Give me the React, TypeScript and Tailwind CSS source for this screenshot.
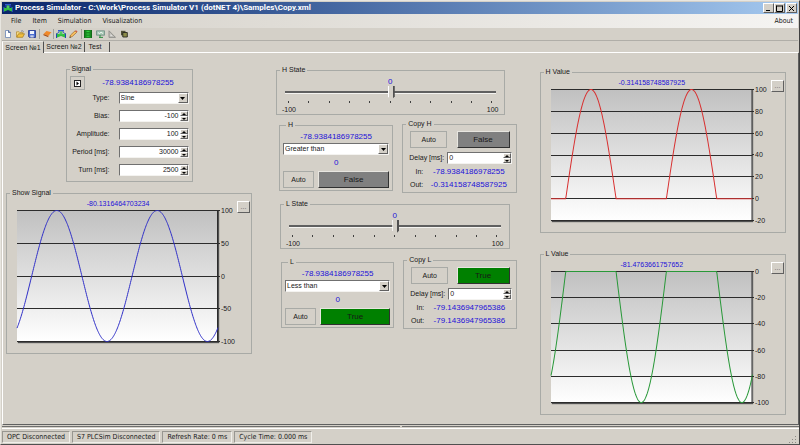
import React from 'react';

const TAHOMA = "font-['DejaVu_Sans_Condensed','DejaVu_Sans',sans-serif]";
const RAISED = 'border border-t-white border-l-white border-r-[#606060] border-b-[#606060] bg-[#d4d0c8]';
const SUNKEN = 'border border-t-[#707070] border-l-[#707070] border-r-[#f4f3f0] border-b-[#f4f3f0] bg-white';

const GroupBox: React.FC<{ title: string; className?: string; children: React.ReactNode }> = ({ title, className = '', children }) => (
  <fieldset className={`relative min-w-0 border border-[#a8aaa6] ${className}`}>
    <legend className="ml-[3px] px-[2px] h-[12px] leading-[12px]">{title}</legend>
    {children}
  </fieldset>
);

const Reading: React.FC<{ children: React.ReactNode; className?: string }> = ({ children, className = '' }) => (
  <output className={`block text-center text-[#1c10d8] whitespace-nowrap ${className}`}>{children}</output>
);

const Combo: React.FC<{ id?: string; label?: string; value: string; className?: string }> = ({ id, label, value, className = '' }) => (
  <div className={`flex h-[12px] ${SUNKEN} ${className}`}>
    <select id={id} aria-label={label} defaultValue={value} className="appearance-none flex-1 min-w-0 pl-px h-[10px] leading-[10px] bg-transparent outline-none">
      <option>{value}</option>
    </select>
    <span className={`flex items-center justify-center w-[10px] h-[10px] pointer-events-none ${RAISED}`}>
      <svg width="5" height="3" viewBox="0 0 5 3"><path d="M0 0h5L2.5 3z" fill="#000" /></svg>
    </span>
  </div>
);

const Spinner: React.FC<{ id: string; value: number; align?: string }> = ({ id, value, align = 'text-right' }) => (
  <div className={`flex flex-1 min-w-0 h-[12px] ${SUNKEN}`}>
    <input
      id={id}
      type="number"
      defaultValue={value}
      className={`flex-1 min-w-0 h-[10px] px-px leading-[10px] bg-transparent outline-none [appearance:textfield] [&::-webkit-inner-spin-button]:appearance-none ${align}`}
    />
    <div className="flex flex-col w-[8px]">
      <button type="button" aria-label="Increase" className={`flex items-center justify-center h-[5px] ${RAISED}`}>
        <svg width="4" height="2" viewBox="0 0 4 2" className="shrink-0"><path d="M0 2h4L2 0z" fill="#000" /></svg>
      </button>
      <button type="button" aria-label="Decrease" className={`flex items-center justify-center h-[5px] ${RAISED}`}>
        <svg width="4" height="2" viewBox="0 0 4 2" className="shrink-0"><path d="M0 0h4L2 2z" fill="#000" /></svg>
      </button>
    </div>
  </div>
);

const AutoButton: React.FC<{ className: string }> = ({ className }) => (
  <button type="button" className={`h-[17px] border border-[#a8aaa6] ${className}`}>Auto</button>
);

const StateButton: React.FC<{ on: boolean; className: string }> = ({ on, className }) => (
  <button
    type="button"
    className={`h-[17px] text-[8px] border border-t-[#e8e6e0] border-l-[#e8e6e0] border-r-[#303030] border-b-[#303030] ${on ? 'bg-[#008000]' : 'bg-[#808080]'} ${className}`}
  >
    {on ? 'True' : 'False'}
  </button>
);

const TrackBar: React.FC<{ title: string; className: string }> = ({ title, className }) => (
  <GroupBox title={title} className={className}>
    <Reading className="mt-px h-[9px] leading-[9px] text-[8px]">0</Reading>
    <input
      type="range"
      min={-100}
      max={100}
      defaultValue={1}
      aria-label={title}
      className="block appearance-none h-[14px] w-[calc(100%-16px)] mx-[8px] bg-no-repeat bg-[linear-gradient(#d4d0c8_5px,#606060_5px,#606060_7px,#f4f3f0_7px,#f4f3f0_8px,#d4d0c8_8px)] [&::-webkit-slider-thumb]:appearance-none [&::-webkit-slider-thumb]:w-[7px] [&::-webkit-slider-thumb]:h-[14px] [&::-webkit-slider-thumb]:bg-[linear-gradient(90deg,#fff_1px,#d4d0c8_1px,#d4d0c8_5px,#505050_5px)] [&::-webkit-slider-thumb]:[clip-path:polygon(0_0,100%_0,100%_75%,50%_100%,0_75%)]"
    />
    <div className="flex justify-between mx-[11px] mt-px">
      {Array.from({ length: 11 }, (_, i) => <span key={i} className="w-px h-[2px] bg-[#404040]" />)}
    </div>
    <div className="flex justify-between pl-[5px] pr-[5px] mt-[2px] leading-[9px]">
      <span>-100</span>
      <span>100</span>
    </div>
  </GroupBox>
);

const Compare: React.FC<{ title: string; op: string; on: boolean; className?: string }> = ({ title, op, on, className = '' }) => (
  <GroupBox title={title} className={`h-[72px] px-[3px] ${className}`}>
    <Reading className="h-[12px] leading-[12px] text-[8px]">-78.9384186978255</Reading>
    <Combo label={`${title} comparison`} value={op} />
    <Reading className="mt-[3px] h-[10px] leading-[10px] text-[8px]">0</Reading>
    <div className="flex gap-[4px] mt-[3px]">
      <AutoButton className="w-[31px]" />
      <StateButton on={on} className="flex-1" />
    </div>
  </GroupBox>
);

const CopyBox: React.FC<{ title: string; on: boolean; input: string; output: string }> = ({ title, on, input, output }) => (
  <GroupBox title={title} className="h-[75px]">
    <div className="flex justify-between pl-[7px] pr-[6px] mt-px">
      <AutoButton className="w-[37px]" />
      <StateButton on={on} className="w-[53px]" />
    </div>
    <div className="flex items-center gap-[3px] pl-[6px] pr-[4px] mt-[4px]">
      <label htmlFor={`delay-${title}`} className="leading-[12px] whitespace-nowrap">Delay [ms]:</label>
      <Spinner id={`delay-${title}`} value={0} align="text-left" />
    </div>
    <div className="grid grid-cols-[20px_1fr] gap-y-[3px] pr-px mt-[3px] leading-[10px]">
      <span className="text-right">In:</span>
      <Reading className="text-[8px]">{input}</Reading>
      <span className="text-right">Out:</span>
      <Reading className="text-[8px]">{output}</Reading>
    </div>
  </GroupBox>
);

interface TrendProps {
  title: string;
  value: string;
  ticks: number[];
  color: string;
  low?: number;
  high?: number;
}

const Trend: React.FC<TrendProps> = ({ title, value, ticks, color, low = -100, high = 100 }) => {
  const top = ticks[0];
  const bottom = ticks[ticks.length - 1];
  const toY = (v: number) => Math.round(((top - v) / (top - bottom)) * 1310) / 10 + 0.5;
  const points = Array.from({ length: 403 }, (_, i) => {
    const x = i / 2;
    const v = 100 * Math.cos(((x - 39.8) / 100.4) * 2 * Math.PI);
    return `${x},${toY(Math.min(high, Math.max(low, v)))}`;
  }).join(' ');
  const fill = `fill-${color.slice(1)}`;

  return (
    <GroupBox title={title} className="h-[167px]">
      <Reading className="h-[9px] leading-[9px] ml-[10px] mr-[32px]">{value}</Reading>
      <div className="flex mt-[2px] ml-[10px]">
        <svg viewBox="0 0 201 132" preserveAspectRatio="none" className="flex-1 min-w-0 h-[132px] overflow-visible shadow-[1px_1px_1px_#505050]">
          <defs>
            <linearGradient id={fill} x1="0" y1="0" x2="0" y2="1">
              <stop offset="0" stopColor="#c0c0c0" />
              <stop offset="1" stopColor="#ffffff" />
            </linearGradient>
          </defs>
          <rect width="201" height="132" fill={`url(#${fill})`} />
          {ticks.map((t) => (
            <line key={t} x1="0" x2="201" y1={Math.floor(toY(t)) + 0.5} y2={Math.floor(toY(t)) + 0.5} stroke="#2c2c2c" strokeWidth="1" />
          ))}
          <line x1="200.5" x2="200.5" y1="0" y2="132" stroke="#2c2c2c" />
          <polyline points={points} fill="none" stroke={color} strokeWidth="1" />
        </svg>
        <div className="flex flex-col justify-between w-[33px] -my-[4px]">
          {ticks.map((t) => (
            <span key={t} className="flex items-center gap-px h-[9px] leading-[9px]">
              <i className="w-[2px] h-px bg-[#2c2c2c]" />
              {t}
            </span>
          ))}
        </div>
      </div>
      <button type="button" aria-label={`${title} options`} className={`absolute right-px top-[2px] w-[13px] h-[12px] leading-[6px] text-[#606060] ${RAISED}`}>...</button>
    </GroupBox>
  );
};

const SIGNAL_FIELDS = [
  { id: 'bias', label: 'Bias:', value: -100 },
  { id: 'amplitude', label: 'Amplitude:', value: 100 },
  { id: 'period', label: 'Period [ms]:', value: 30000 },
  { id: 'turn', label: 'Turn [ms]:', value: 2500 },
];

const SignalBox: React.FC = () => (
  <GroupBox title="Signal" className="w-[127px] h-[119px] mx-auto">
    <div className="flex items-center pl-[3px] mt-px">
      <button type="button" aria-label="Run" className="flex items-center justify-center w-[15px] h-[14px] border border-[#a8aaa6]">
        <svg width="7" height="7" viewBox="0 0 7 7">
          <rect x="0.5" y="0.5" width="6" height="6" fill="#fff" stroke="#222" />
          <path d="M2.5 1.5v4l2.5-2z" fill="#000" />
        </svg>
      </button>
      <Reading className="flex-1 text-[8px] leading-[10px]">-78.9384186978255</Reading>
    </div>
    <div className="grid grid-cols-[43px_1fr] gap-x-[9px] gap-y-[6px] pr-[3px] mt-[2px] leading-[12px]">
      <label htmlFor="type" className="text-right">Type:</label>
      <Combo id="type" value="Sine" />
      {SIGNAL_FIELDS.map((f) => (
        <React.Fragment key={f.id}>
          <label htmlFor={f.id} className="text-right whitespace-nowrap">{f.label}</label>
          <Spinner id={f.id} value={f.value} />
        </React.Fragment>
      ))}
    </div>
  </GroupBox>
);

const TankIcon: React.FC = () => (
  <svg width="10" height="8" viewBox="0 0 10 8">
    <path d="M2 0h6v1.4H2z" fill="#3058d0" />
    <path d="M3.5 1.4h3V5h-3z" fill="#50c860" />
    <path d="M0 3.2l5 1.4 5-1.4V8L5 6 0 8z" fill="#30c040" />
    <path d="M.5 3.5V8M9.5 3.5V8M3 1.5L1.5 3.6M7 1.5l1.5 2.1" stroke="#2038c0" strokeWidth=".9" />
  </svg>
);

const Separator = () => <span className="w-px h-[10px] bg-[#a0a09a]" />;

const Tool: React.FC<{ label: string; children: React.ReactNode }> = ({ label, children }) => (
  <button type="button" aria-label={label} className="flex items-center justify-center w-[12px] h-[11px]">{children}</button>
);

const Toolbar: React.FC = () => (
  <div className="flex items-center h-[12px]">
    <Tool label="New">
      <svg width="8" height="8" viewBox="0 0 8 8"><path d="M1.5.5h3.2L6.5 2.4v5.1h-5z" fill="#fff" stroke="#6884b4" strokeWidth=".8" /><path d="M4.5.5v2h2" fill="none" stroke="#334f88" strokeWidth=".8" /></svg>
    </Tool>
    <Tool label="Open">
      <svg width="9" height="8" viewBox="0 0 9 8"><path d="M.5 7V1.8h2.6l.7.8h3v1.3" fill="#f8df88" stroke="#b08428" strokeWidth=".7" /><path d="M.7 7.3l1.8-3.5h6L6.7 7.3z" fill="#f4c040" stroke="#a07818" strokeWidth=".7" /><path d="M5 1.2Q6.5 0 7.8 2" fill="none" stroke="#667" strokeWidth=".7" /></svg>
    </Tool>
    <Tool label="Save">
      <svg width="8" height="8" viewBox="0 0 8 8"><path d="M.5.5h7v7h-6l-1-1z" fill="#4a6cd0" stroke="#20348c" strokeWidth=".8" /><path d="M2 1h4v3H2z" fill="#f0f4fc" /><path d="M2.3 5.3h3.4v2.2H2.3z" fill="#c8d0e8" /></svg>
    </Tool>
    <span className="w-px" />
    <Separator />
    <span className="w-px" />
    <Tool label="Library">
      <svg width="9" height="8" viewBox="0 0 8 8"><path d="M0 4l3-3 5 1.3L5 6z" fill="#f08828" /><path d="M0 4l5 2v1.3L0 5.3z" fill="#a84c10" /><path d="M5 6l3-3.7v1.3L5 7.3z" fill="#d8c8b0" /></svg>
    </Tool>
    <Separator />
    <span className="w-px" />
    <Tool label="Run"><TankIcon /></Tool>
    <Tool label="Edit">
      <svg width="9" height="8" viewBox="0 0 9 8"><path d="M.8 7.4l.8-2.4L6 .9l1.8 1.4L3.2 6.6z" fill="#f8c060" stroke="#a06828" strokeWidth=".7" /><path d="M6 .9L7 .2l1.6 1.3-.8.8z" fill="#d05840" /><path d="M.5 7.8l.5-1.4 1 .8z" fill="#222" /></svg>
    </Tool>
    <span className="w-[2px]" />
    <Separator />
    <Tool label="Grid">
      <svg width="8" height="8" viewBox="0 0 8 8"><path d="M0 0h8v8H0z" fill="#188820" /><path d="M2.5 1.5h3M2.5 4h3M2.5 6.3h3" stroke="#30d040" /><path d="M0 0v8M8 0v8" stroke="#0a4c10" /></svg>
    </Tool>
    <Tool label="Monitor">
      <svg width="9" height="8" viewBox="0 0 9 8"><path d="M.5.8h8v4.4h-8z" fill="#a8c8b4" stroke="#6c8c84" strokeWidth=".8" /><path d="M2 2.5l1.5 1.3L5 2l2 1.6" fill="none" stroke="#fff" strokeWidth=".8" /><path d="M4 5v2.6M3 7.4h4" stroke="#2c9040" /></svg>
    </Tool>
    <Tool label="Measure">
      <svg width="8" height="8" viewBox="0 0 8 8"><path d="M1 .8v6.6h6.5z" fill="#c4c2bc" stroke="#8c8c88" strokeWidth=".9" /><path d="M2.6 4.3v1.6h1.6z" fill="#eee" /></svg>
    </Tool>
    <Tool label="Layers">
      <svg width="8" height="8" viewBox="0 0 8 8"><path d="M1 .8h4.5v4.5H1z" fill="#505038" /><path d="M2.8 2.5h4.5V7H2.8z" fill="#8c8c48" stroke="#282820" strokeWidth=".9" /></svg>
    </Tool>
  </div>
);

const WindowButton: React.FC<{ label: string; d: string; className?: string }> = ({ label, d, className = '' }) => (
  <button type="button" aria-label={label} className={`flex items-center justify-center w-[11px] h-[10px] ${RAISED} ${className}`}>
    <svg width="7" height="7" viewBox="0 0 7 7" className="shrink-0"><path d={d} fill="none" stroke="#000" /></svg>
  </button>
);

const STATUS = ['OPC Disconnected', 'S7 PLCSim Disconnected', 'Refresh Rate: 0 ms', 'Cycle Time: 0.000 ms'];

const App: React.FC = () => (
  <div className="flex flex-col min-h-screen pt-px pl-px bg-[#d4d0c8] border border-t-[#e8e6e0] border-l-[#e8e6e0] border-r-[#404040] border-b-[#505050] text-[7px] leading-[9px] text-[#181818] font-['Liberation_Sans',Arial,sans-serif]">
    <header className={TAHOMA}>
      <div className="flex items-center h-[12px] mr-px pl-px pr-px bg-linear-to-r from-[#0a246a] to-[#a6caf0]">
        <TankIcon />
        <h1 className="flex-1 ml-[2px] text-[8px] leading-[12px] font-bold text-white whitespace-nowrap font-['Roboto','Open_Sans',sans-serif]">
          Process Simulator - C:\Work\Process Simulator V1 (dotNET 4)\Samples\Copy.xml
        </h1>
        <WindowButton label="Minimize" d="M1 5.5h4" />
        <WindowButton label="Maximize" d="M.5 1h6M.5 .5v6h6v-6" />
        <WindowButton label="Close" d="M1 1l5 5M6 1l-5 5" className="ml-px" />
      </div>
      <nav className="flex items-center gap-[11px] h-[14px] mr-px pl-[9px] pr-[5px] bg-linear-to-r from-[#d4d0c8] to-[#f5f4f2]">
        <button type="button">File</button>
        <button type="button">Item</button>
        <button type="button">Simulation</button>
        <button type="button">Visualization</button>
        <button type="button" className="ml-auto">About</button>
      </nav>
      <Toolbar />
    </header>

    <div role="tablist" className="flex items-end h-[13px] mr-px border-t border-[#b0aea8] leading-[10px]">
      <button type="button" role="tab" aria-selected="true" className="h-[12px] w-[42px] border-t border-l border-t-[#e8e6e0] border-l-white border-r border-r-[#505050]">Screen №1</button>
      <div className="flex flex-1 border-b border-white">
        <button type="button" role="tab" aria-selected="false" className="w-[41px] h-[10px] border-r border-[#505050]">Screen №2</button>
        <button type="button" role="tab" aria-selected="false" className="w-[25px] h-[10px] pr-[4px] border-r border-[#505050]">Test</button>
      </div>
    </div>

    <main className="flex-1 grid grid-cols-[246fr_242fr_247fr] gap-[23px] items-start pl-[3px] pr-[12px] pb-[9px] border-l border-l-white border-r border-r-[#606060] border-b border-b-[#606060]">
      <section className="flex flex-col gap-[5px] pt-[10px]">
        <SignalBox />
        <Trend title="Show Signal" value="-80.1316464703234" ticks={[100, 50, 0, -50, -100]} color="#3030c8" />
      </section>

      <section className="flex flex-col pt-[11px]">
        <TrackBar title="H State" className="ml-px mr-[12px] h-[51px]" />
        <div className="grid grid-cols-2 items-start gap-[9px] pl-[4px] mt-[3px]">
          <Compare title="H" op="Greater than" on={false} className="mt-px" />
          <CopyBox title="Copy H" on={false} input="-78.9384186978255" output="-0.314158748587925" />
        </div>
        <TrackBar title="L State" className="ml-[5px] mr-[7px] mt-[5px] h-[51px]" />
        <div className="grid grid-cols-2 items-start gap-[9px] pl-[6px] mt-[5px]">
          <Compare title="L" op="Less than" on className="mt-[2px]" />
          <CopyBox title="Copy L" on input="-79.1436947965386" output="-79.1436947965386" />
        </div>
      </section>

      <section className="flex flex-col gap-[15px] pt-[13px]">
        <Trend title="H Value" value="-0.314158748587925" ticks={[100, 80, 60, 40, 20, 0, -20]} color="#d83030" low={0} />
        <Trend title="L Value" value="-81.4763661757652" ticks={[0, -20, -40, -60, -80, -100]} color="#289838" high={0} />
      </section>
    </main>

    {/* splitter */}
    <div className="flex gap-[2px] mt-px">
      <span className="flex-1 h-px bg-[#707070]" />
      <span className="flex-1 h-px bg-[#707070]" />
    </div>

    <footer className={`flex items-center gap-[2px] h-[16px] mt-px border-t border-white ${TAHOMA}`}>
      {STATUS.map((s) => (
        <span key={s} className="px-[4px] h-[12px] leading-[11px] whitespace-nowrap border border-t-[#989690] border-l-[#989690] border-r-[#f0efea] border-b-[#f0efea]">{s}</span>
      ))}
      <svg width="8" height="8" viewBox="0 0 8 8" className="ml-auto mr-[2px] self-end" fill="#8c8a84">
        <path d="M6 0h1v1H6zM3 3h1v1H3zM6 3h1v1H6zM0 6h1v1H0zM3 6h1v1H3zM6 6h1v1H6z" />
      </svg>
    </footer>
  </div>
);

export default App;
